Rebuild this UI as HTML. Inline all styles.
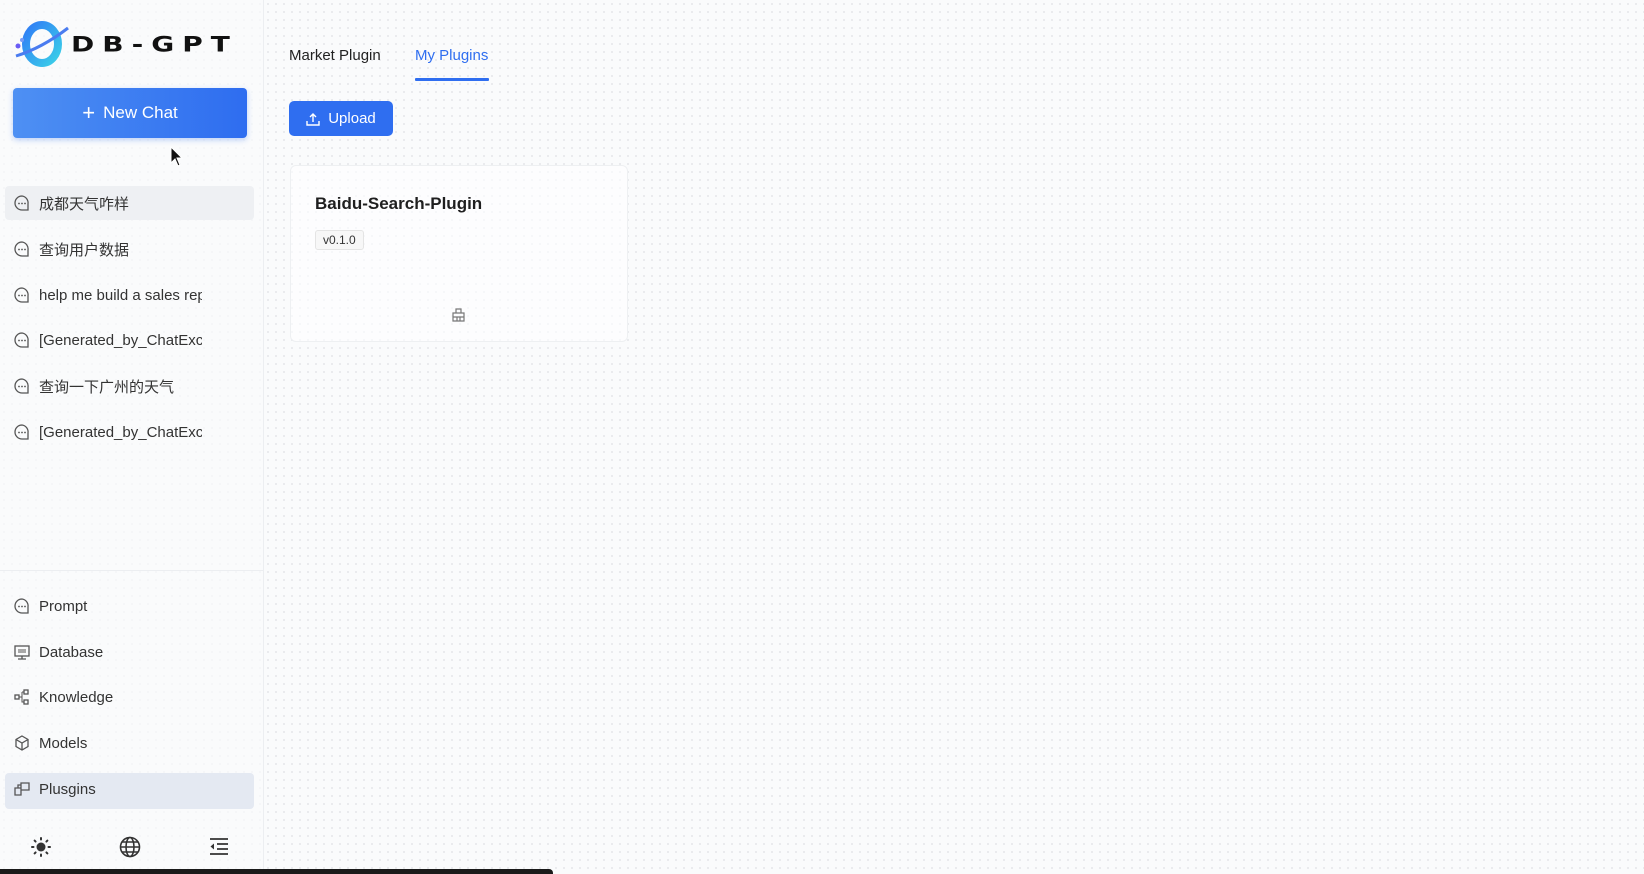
<!DOCTYPE html>
<html><head><meta charset="utf-8"><style>
*{margin:0;padding:0;box-sizing:border-box}
body{width:1644px;height:874px;overflow:hidden;background:#fafbfc;font-family:"Liberation Sans","Noto Sans CJK SC",sans-serif;color:#1f1f1f;position:relative;
background-image:radial-gradient(#e4e6ea 1px,transparent 1px);background-size:8px 8px}
.side{position:absolute;left:0;top:0;width:264px;height:874px;background:rgba(250,251,252,.7);border-right:1px solid #eceef1}
.abs{position:absolute}
.item{position:absolute;left:13px;width:189px;overflow:hidden;white-space:nowrap;font-size:15px;color:#333;display:flex;align-items:center;gap:8px;height:20px}
.ic{width:18px;height:18px;flex:none}
</style></head><body>
<div class="side">
 <svg class="abs" style="left:12px;top:18px" width="60" height="50" viewBox="0 0 60 50">
  <defs><linearGradient id="g" x1="0" y1="0" x2="1" y2="1"><stop offset="0" stop-color="#2f7cf6"/><stop offset="1" stop-color="#3bd0e8"/></linearGradient></defs>
  <ellipse cx="30" cy="26" rx="16" ry="19" fill="none" stroke="url(#g)" stroke-width="8"/>
  <path d="M4 38 Q30 30 56 10" stroke="#4a7cf0" stroke-width="3" fill="none"/>
  <circle cx="6" cy="28" r="2.5" fill="#6a5cf5"/><circle cx="10" cy="22" r="2" fill="#7a9cf5"/>
 </svg>
 <div class="abs" style="left:71px;top:28px;font-size:28px;font-weight:bold;letter-spacing:8px;color:#111;font-family:'DejaVu Sans',sans-serif;transform:scaleY(.75);transform-origin:left center">DB-GPT</div>
 <div class="abs" style="left:13px;top:88px;width:234px;height:50px;border-radius:4px;background:linear-gradient(90deg,#4e90f3,#2e6df0);color:#fff;font-size:17px;display:flex;align-items:center;justify-content:center;box-shadow:0 2px 6px rgba(46,109,240,.3)"><span style="font-size:22px;margin-right:8px;font-weight:300">+</span>New Chat</div>
 <div class="abs" style="left:5px;top:186px;width:249px;height:34px;background:#eef0f3;border-radius:4px"></div>
 <div class="abs" style="left:5px;top:773px;width:249px;height:36px;background:#e4e9f2;border-radius:4px"></div>
 <div class="abs" style="left:0;top:570px;width:264px;border-top:1px solid #eceef1"></div>
</div>
<svg width="0" height="0" style="position:absolute"><defs><g id="chat"><path d="M9 2a7 7 0 1 0 0 14h6v-6A7 7 0 0 0 9 2z" fill="none" stroke="#555" stroke-width="1.3"/><circle cx="6" cy="9.5" r=".9" fill="#555"/><circle cx="9" cy="9.5" r=".9" fill="#555"/><circle cx="12" cy="9.5" r=".9" fill="#555"/></g></defs></svg>
<div class="item" style="top:193px"><svg class="ic"><use href="#chat"/></svg>成都天气咋样</div>
<div class="item" style="top:239px"><svg class="ic"><use href="#chat"/></svg>查询用户数据</div>
<div class="item" style="top:285px"><svg class="ic"><use href="#chat"/></svg>help me build a sales rep</div>
<div class="item" style="top:330px"><svg class="ic"><use href="#chat"/></svg>[Generated_by_ChatExc</div>
<div class="item" style="top:376px"><svg class="ic"><use href="#chat"/></svg>查询一下广州的天气</div>
<div class="item" style="top:422px"><svg class="ic"><use href="#chat"/></svg>[Generated_by_ChatExc</div>
<div class="item" style="top:596px"><svg class="ic"><use href="#chat"/></svg>Prompt</div>
<div class="item" style="top:642px"><svg class="ic" viewBox="0 0 18 18"><rect x="2" y="3" width="14" height="10" fill="none" stroke="#555" stroke-width="1.3"/><path d="M9 13v3M5 16h8" stroke="#555" stroke-width="1.3"/><path d="M5 7h8M5 9h8" stroke="#555"/></svg>Database</div>
<div class="item" style="top:687px"><svg class="ic" viewBox="0 0 18 18"><rect x="2" y="7" width="4" height="4" fill="none" stroke="#555" stroke-width="1.3"/><rect x="11" y="2" width="4" height="4" fill="none" stroke="#555" stroke-width="1.3"/><rect x="11" y="12" width="4" height="4" fill="none" stroke="#555" stroke-width="1.3"/><path d="M6 9h3M9 4v10h2M9 4h2" stroke="#555" fill="none"/></svg>Knowledge</div>
<div class="item" style="top:733px"><svg class="ic" viewBox="0 0 18 18"><path d="M9 2l6 3.5v7L9 16l-6-3.5v-7z M3 5.5 9 9l6-3.5M9 9v7" fill="none" stroke="#555" stroke-width="1.3"/></svg>Models</div>
<div class="item" style="top:779px"><svg class="ic" viewBox="0 0 18 18"><path d="M2 8h6v7H2zM8 3h8v7H8z M5 8V5h3" fill="none" stroke="#555" stroke-width="1.3"/></svg>Plusgins</div>
<svg class="abs" style="left:31px;top:837px" width="20" height="20" viewBox="0 0 20 20"><circle cx="10" cy="10" r="4.5" fill="#333"/><g stroke="#333" stroke-width="2" stroke-linecap="round"><path d="M10 1v1.5M10 17.5V19M1 10h1.5M17.5 10H19M3.6 3.6l1 1M15.4 15.4l1 1M3.6 16.4l1-1M15.4 4.6l1-1"/></g></svg>
<svg class="abs" style="left:119px;top:836px" width="22" height="22" viewBox="0 0 22 22" fill="none" stroke="#333" stroke-width="1.6"><circle cx="11" cy="11" r="9.5"/><ellipse cx="11" cy="11" rx="4" ry="9.5"/><path d="M1.5 11h19M3 6h16M3 16h16"/></svg>
<svg class="abs" style="left:209px;top:838px" width="20" height="18" viewBox="0 0 20 18" stroke="#333" stroke-width="1.8"><path d="M1 1h18M8 6h11M8 11h11M1 16h18"/><path d="M5 5.5v6L1.5 8.5z" fill="#333" stroke="none"/></svg>
<svg class="abs" style="left:170px;top:146px" width="14" height="22" viewBox="0 0 14 22"><path d="M1 1v16l4-4 3 7 2-1-3-7h5z" fill="#111" stroke="#fff"/></svg>
<div class="abs" style="left:289px;top:47px;font-size:15px;color:#222">Market Plugin</div>
<div class="abs" style="left:415px;top:47px;font-size:15px;color:#2f6ef0">My Plugins</div>
<div class="abs" style="left:415px;top:78px;width:74px;height:3px;background:#2f6ef0;border-radius:1px"></div>
<div class="abs" style="left:289px;top:101px;width:104px;height:35px;border-radius:5px;background:#2f6ef0;color:#fff;font-size:15px;display:flex;align-items:center;justify-content:center;gap:8px"><svg width="14" height="14" viewBox="0 0 14 14" fill="none" stroke="#fff" stroke-width="1.4"><path d="M7 10V2M4 5l3-3 3 3M1 9v4h12V9"/></svg>Upload</div>
<div class="abs" style="left:290px;top:165px;width:338px;height:177px;border:1px solid #eef0f2;border-radius:6px;background:rgba(255,255,255,.6)"></div>
<div class="abs" style="left:315px;top:194px;font-size:17px;font-weight:bold;color:#1f1f1f">Baidu-Search-Plugin</div>
<div class="abs" style="left:315px;top:230px;padding:2px 7px;border:1px solid #e4e4e4;background:#f7f7f7;border-radius:3px;font-size:12px;color:#333">v0.1.0</div>
<svg class="abs" style="left:452px;top:308px" width="13" height="14" viewBox="0 0 13 14" fill="none" stroke="#777" stroke-width="1.2"><path d="M4 1h5v4H4zM1 5h11v8H1zM1 9h11M5 9v4M8 9v4"/></svg>
<div class="abs" style="left:0;top:869px;width:553px;height:5px;background:#1a1a1a;border-radius:0 4px 0 0"></div>
</body></html>
